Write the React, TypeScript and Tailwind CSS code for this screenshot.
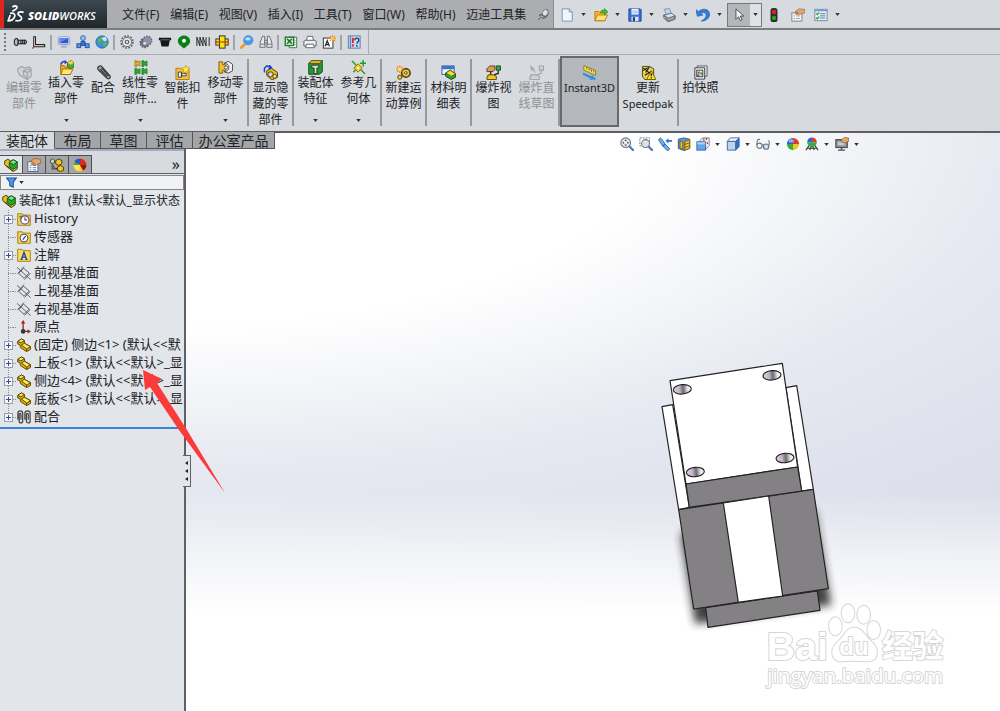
import type { ReactNode } from 'react';

const Y = '#f5c518';
const G = '#1f9d2c';
const K = '#222';

// All drawings use a 16x16 grid
const icons: Record<string, ReactNode> = {
  bolt: (
    <g fill="#b9bcc0" stroke={K} strokeWidth="1.2">
      <path d="M1.5 8c0-3 1-4 2.5-4s2 1.500 2 4-.5 4-2 4-2.500-1-2.500-4z" />
      <path d="M6 6h8.500l1 2-1 2H6z" />
      <path d="M9 5.500v5M11 5.500v5M13 5.500v5" />
    </g>
  ),
  angle: (
    <g fill="#f4f4f4" stroke={K} strokeWidth="1.2">
      <path d="M2 2h2v9h10.500v2.500H2z" />
      <path d="M0.500 15.500l1.500-2" stroke="#e02020" />
    </g>
  ),
  monitor: (
    <g>
      <rect x="1.500" y="2" width="13" height="9" rx="1" fill="#e6eaf4" stroke="#8d98b5" />
      <rect x="3" y="3.500" width="10" height="6" fill="#2c56d8" />
      <path d="M3 9.500L13 3.500H3z" fill="#5b86f0" />
      <path d="M5.500 12h5l1.500 2.500H4z" fill="#aab2c8" />
    </g>
  ),
  network: (
    <g>
      <path d="M8 6v4M4 11l4-3 4 3" stroke="#333" fill="none" />
      <circle cx="8" cy="3.500" r="2.800" fill="#8fc0f5" stroke="#2a5fb4" />
      <rect x="1" y="10" width="4.500" height="4.500" fill="#5c92e6" stroke="#1e4fa8" />
      <rect x="10.500" y="10" width="4.500" height="4.500" fill="#5c92e6" stroke="#1e4fa8" />
      <rect x="5.800" y="7.500" width="4.500" height="4.500" fill="#3b72cc" stroke="#1e4fa8" />
    </g>
  ),
  globe: (
    <g>
      <circle cx="8" cy="8" r="7" fill="#3d8de8" stroke="#1c5fb4" />
      <path d="M3 5l4-3 3 2-3 3-1 3-3-1zM9 9l4-2 1 3-3 4-2-2z" fill="#56b746" />
      <path d="M8 3l4-1 2 4-3 1-2-1z" fill="#cfe4fb" />
    </g>
  ),
  gearOutline: (
    <g fill="none" stroke="#5c646c">
      <circle cx="8" cy="8" r="6.800" strokeWidth="1.800" strokeDasharray="2 1.500" />
      <circle cx="8" cy="8" r="5.300" fill="#e4e7ea" />
      <circle cx="8" cy="8" r="2" strokeWidth="1.400" />
    </g>
  ),
  gearSolid: (
    <g>
      <circle cx="6.500" cy="9" r="5" fill="#77758c" stroke="#5a5870" strokeWidth="2" strokeDasharray="1.800 1.300" />
      <circle cx="9.500" cy="6.500" r="5" fill="#928fa6" stroke="#6b6980" strokeWidth="1.800" strokeDasharray="1.800 1.300" />
      <circle cx="6.500" cy="9.500" r="1.800" fill="#d7dade" />
    </g>
  ),
  bushing: (
    <g>
      <path d="M1 3h14v3h-1.500L12 13H4L2.500 6H1z" fill="#171717" />
      <path d="M3 5.500h10" stroke="#777" />
    </g>
  ),
  pin: (
    <g>
      <path d="M8 .5C4 .5 1 3.300 1 7c0 3.500 4 5.500 7 8.500 3-3 7-5 7-8.500C15 3.300 12 .5 8 .5z" fill="#0a7f14" />
      <circle cx="8" cy="6.500" r="2.300" fill="#fff" />
    </g>
  ),
  spring: <path d="M1 2.500v10M1 2.500l3.500 10v-10l3.500 10v-10l3.500 10v-10M15 2.500v10" stroke={K} fill="none" strokeWidth="1.100" />,
  coupling: (
    <g stroke={K}>
      <rect x="1" y="4.500" width="14" height="7" fill="#f7e711" />
      <rect x="5" y="1" width="6.500" height="14" fill="#f7e711" />
      <path d="M0 8h16" stroke="#e02020" strokeWidth="1.300" />
    </g>
  ),
  search: (
    <g>
      <path d="M1.500 14.500l4.500-4.500" stroke="#ee9a1c" strokeWidth="3" strokeLinecap="round" />
      <circle cx="9.500" cy="6" r="5.300" fill="#3b9df2" stroke="#6f87c8" />
      <ellipse cx="9" cy="4.500" rx="3" ry="1.800" fill="#bfe0ff" />
    </g>
  ),
  binoculars: (
    <g fill="#e8ebee" stroke="#5b6168">
      <path d="M4 1.500h2.500v4.500l.5 8H1L1.500 8z" />
      <path d="M12 1.500H9.500v4.500L9 14h6l-.5-6z" />
      <path d="M6.500 6h3v3h-3zM2 10.500h5M9 10.500h5" />
    </g>
  ),
  excel: (
    <g>
      <path d="M6 2.500h8.500v12H6z" fill="#fff" stroke="#356b3a" />
      <path d="M11 6h3M11 8.500h3M11 11h3" stroke="#8bb58e" />
      <rect x="1.500" y="2.500" width="9.500" height="9.500" fill="#e8f4e6" stroke="#1d7a2c" strokeWidth="1.600" />
      <path d="M3.500 4.500l5.500 5.500M9 4.500L3.500 10" stroke="#1d7a2c" strokeWidth="2" />
    </g>
  ),
  printer: (
    <g fill="#eceef0" stroke="#565c63">
      <path d="M5 1.500h6l1 5H4z" fill="#fff" />
      <path d="M1 7l2-1h10l2 1v5.500H1z" />
      <path d="M4 10.500h8l1 4H3z" fill="#fff" />
    </g>
  ),
  printerTilt: (
    <g stroke="#5b6168">
      <path d="M2.500 1.500l6-1 2.500 7-5.500 1z" fill="#b7d6f5" stroke="#7b93ad" />
      <path d="M2 8l9-2 4 3v3.500L7 15.500l-5-4z" fill="#dfe2e5" />
      <path d="M2 8l5 3.500 8-2.500-1 4-7 2.500z" fill="#9ea4aa" />
    </g>
  ),
  annotationView: (
    <g>
      <rect x="1.500" y="3.500" width="11" height="11.500" fill="#fff" stroke={K} />
      <path d="M3.500 13l2.500-6.500L8.500 13M4.500 11h3" stroke={K} strokeWidth="1.400" fill="none" />
      <path d="M12 0v8M8 4h8M9 1.200l6 5.600M15 1.200L9 6.800" stroke="#f08a1c" strokeWidth="1.200" />
      <circle cx="12" cy="4" r="1.700" fill="#ffd84a" />
    </g>
  ),
  check: (
    <g>
      <rect x="1.500" y="1" width="13.500" height="14" fill="#c7daf1" stroke="#4f74a5" />
      <path d="M4 1.500v13" stroke="#5d83b5" strokeWidth="1.500" />
      <path d="M6.800 3v6M6.800 10.500v2.500" stroke="#e02020" strokeWidth="2" />
      <path d="M9 6c0-3.500 4.500-3 4.500 0 0 2-2.200 1.500-2.200 4M11.300 11.500v2" stroke="#23427a" fill="none" strokeWidth="1.600" />
    </g>
  ),
  file: (
    <g>
      <path d="M2.500 1h8l3.500 3.500V15H2.500z" fill="#eff6ff" stroke="#6f8cad" />
      <path d="M10.500 1v3.500H14" fill="#c6dcf4" stroke="#6f8cad" />
    </g>
  ),
  open: (
    <g>
      <path d="M1 4h4.500L7 5.500h5.500V14.500H1z" fill="#f3b824" stroke="#b57d0c" />
      <path d="M4 8h11.500l-3 6.500H1z" fill="#ffe07a" stroke="#b57d0c" />
      <path d="M7.500 5.500c0-3.500 3-4 4.500-2.500V.5l4 4-4 3.500V6c-1.500-1-3-.5-4.500-.5z" fill="#42bb2f" stroke="#1c7d18" strokeWidth=".6" />
    </g>
  ),
  save: (
    <g>
      <path d="M1 1h13l1 1v13H1z" fill="#3a6fd6" stroke="#1b3f92" />
      <rect x="4" y="1" width="8" height="6.500" fill="#eef3fb" />
      <path d="M5 3.500h6M5 5.500h6" stroke="#9fb1d0" />
      <rect x="4" y="10" width="8" height="5" fill="#dde4ef" />
      <rect x="5.500" y="10.500" width="2.500" height="4.500" fill="#223c7a" />
    </g>
  ),
  undo: <path d="M0 2l1.500 7.500L8 8 5.500 6.500c2-2 5.500-1.500 6 1 .500 3-1.500 5-5.500 7.500 6 0 10-4 9.500-8.500C15 .5 7 .0 3 4z" fill="#2f80de" stroke="#1a56a8" strokeWidth=".7" />,
  cursor: <path d="M4.500 1v12l3-3 2 4.500 2-1-2-4.300h4z" fill="#f2f2f2" stroke="#444" />,
  traffic: (
    <g>
      <rect x="4" y="0" width="8" height="16" rx="3" fill="#2d2d2d" />
      <circle cx="8" cy="4.500" r="2.500" fill="#e32222" />
      <circle cx="8" cy="11.300" r="2.500" fill="#1fa827" />
    </g>
  ),
  properties: (
    <g>
      <rect x="1" y="5.500" width="11.500" height="9.500" fill="#f5f5f2" stroke="#777" />
      <path d="M3 9h1.500M6 9h4M3 12h1.500M6 12h4" stroke="#8a8f96" />
      <path d="M5 4l4-3 6.500.5v4l-4.500 1.500-5 .5-1.500-1.500 4-.5z" fill="#e0a870" stroke="#91602f" strokeWidth=".7" />
    </g>
  ),
  options: (
    <g>
      <rect x="1" y="1.500" width="14" height="13" fill="#e3eef9" stroke="#6d87a4" />
      <path d="M1 3h14" stroke="#6d9fd5" strokeWidth="1.500" />
      <path d="M7 6.500h6M7 9h6M7 11.500h6" stroke="#55708c" />
      <path d="M2.500 6l1.200 1.500L6 5M2.500 11l1.200 1.500L6 10" stroke={G} fill="none" strokeWidth="1.300" />
    </g>
  ),
  pushpin: (
    <g>
      <path d="M1.500 14.500l4-4" stroke="#555" strokeWidth="1.300" />
      <path d="M3 8l4.500-1.500L9 2l5-1 1 5-2.500 4.500L8 13z" fill="#6d7282" stroke="#4a4e5c" />
      <ellipse cx="11" cy="5" rx="3" ry="3.800" fill="#dfe2ea" transform="rotate(25 11 5)" />
      <path d="M4.500 9l4 2.500" stroke="#b8bcc8" strokeWidth="1.500" />
    </g>
  ),
  part: (
    <g stroke="#4c3b00" strokeWidth="1">
      <path d="M.8 4L5 1l3.500 2v3l7 4v3L11 15.500 4 11 3.500 8 .8 6.800z" fill="#dcae0c" />
      <path d="M.8 4L5 1l3.500 2-4 2.500zM5 8l3.500-2 7 4L11 12.500z" fill="#ffe75a" />
      <path d="M11 12.500v3" fill="none" />
    </g>
  ),
  assembly: (
    <g strokeWidth="1">
      <path d="M.8 3.500l3.500-2 3 1.500v4.500L15 9.500v3L10.500 15.500 3.500 10 .8 7.500z" fill="#edc01c" stroke="#3b2e00" />
      <path d="M6 5l4.500-3L15.200 4.500v5.500l-4.500 3L6 10z" fill="#20a72e" stroke="#0b4f16" />
      <path d="M6 5l4.500-3 4.700 2.500L11 7.500z" fill="#7ee27e" stroke="#0b4f16" />
      <path d="M3 9l7.500 6" stroke="#3b2e00" />
    </g>
  ),
  partGray: (
    <g fill="#d0d3d6" stroke="#a2a5a9" strokeWidth="1.200">
      <path d="M1 4l4-2.500 3 1.500 5-1 2 2v8l-4 3.500L3 11 1 7z" />
      <path d="M7 6l5-2 3 1.500-4 2.500zM11 8v7M7 6v5l4 3" />
    </g>
  ),
  insertPart: (
    <g>
      <path d="M1.500 6h4l1 1.500H12V15.500H2z" fill="#efaa14" stroke="#a36d05" />
      <path d="M4 9.500h11L12 15.500H2z" fill="#ffe479" stroke="#a36d05" />
      <path d="M2 5c.5-3 3-4 5-3" stroke="#1a3bd0" fill="none" strokeWidth="1.600" />
      <path d="M6 0l3 2.500-3 2z" fill="#1a3bd0" />
      <path d="M9 3l3.500-2.500L16 3v4.500L12 9.500 9 7z" fill="#38b43c" stroke="#6d5704" />
      <path d="M9 3l3.500-2.500L16 3l-3.500 2z" fill="#f2d33a" />
    </g>
  ),
  mate: (
    <g fill="none" stroke="#3c3c3c" strokeWidth="1.400">
      <path d="M2.500 5l9 9c2 2 5-.5 3-2.800L6.500 2C4-.5.5 2.500 2.500 5z" fill="#a9abae" />
      <path d="M4.500 4.500l7.500 8M6 3l7.500 8.500" />
    </g>
  ),
  pattern: (
    <g>
      <path d="M2 .8h2v1.700l3.500-1.500v5.500L4 5v2H2z" fill="#f0b41b" stroke="#765704" strokeWidth=".6" />
      <path d="M9.500.8h2v1.700l3.500-1.500v5.500L11.500 5v2h-2zM2 9h2v1.700l3.500-1.500v5.500L4 13.300v2H2zM9.500 9h2v1.700L15 9.200v5.500l-3.500-1.400v2h-2z" fill="#1fb325" stroke="#0d5c14" strokeWidth=".6" />
    </g>
  ),
  smartFastener: (
    <g>
      <path d="M1 3.500h5L7.500 5H15v10.500H1z" fill="#f1c24a" stroke="#b37c10" />
      <path d="M3.500 7.500h3.500v5.500H3.500zM7 9h5v2.500H7z" fill="#e8e8e8" stroke="#333" strokeWidth=".9" />
      <path d="M11.500 0l1.200 3 3.300.2-2.500 2.300L14.500 9l-3-2-3 2 1-3.500L7 3.200 10.300 3z" fill="#fff04a" stroke="#c88a12" strokeWidth=".7" />
    </g>
  ),
  moveComponent: (
    <g>
      <path d="M1 2h4v3h3v6H5v3H1z" fill="#f3bd28" stroke="#6f5104" strokeWidth=".9" />
      <path d="M6.500 3.500L11 1.500l4.500 3v7L11 14 6.500 12.500c4-.5 5-2 5-4.500s-1-4-5-4.500z" fill="#f1f1f1" stroke="#444" />
      <circle cx="8.500" cy="8" r="1.700" fill="#eee" stroke="#444" strokeWidth=".8" />
    </g>
  ),
  showHidden: (
    <g>
      <path d="M4 6l5-2.500 6.500 4.500v5L9.500 16 4 11z" fill="#e9ba19" stroke="#4f3e02" />
      <circle cx="8" cy="10" r="2.800" fill="#cfd3da" stroke="#4f3e02" />
      <circle cx="12.500" cy="12" r="2" fill="#fff2a0" stroke="#4f3e02" />
      <path d="M1.500 8V3.500L4 1l4 1.500M6.500 0L9 2.800 6 4" stroke="#1d3ed2" fill="none" strokeWidth="1.500" />
    </g>
  ),
  asmFeature: (
    <g>
      <path d="M.8 3.500L4 .8h11.200v12L12 15.200H.8z" fill="#1f9d2c" stroke="#0e4d18" />
      <path d="M.8 3.500L4 .8h11.200L12 3.500z" fill="#f2d33a" stroke="#5e4c04" />
      <path d="M4 5.500h7.500v3H9.500v6h-3v-6H4z" fill="#d7dadf" stroke="#333" />
    </g>
  ),
  refGeometry: (
    <g>
      <path d="M1 1l4.500 4.500M15 15l-4.500-4.500M13 0v7M9.500 3.500h6.500M2.500 13l2.500-2.500" stroke={G} strokeWidth="1.500" />
      <path d="M7.500 4l4.500 4.500L7.500 13 3 8.500z" fill="#f2cc26" stroke="#8c6e07" />
      <circle cx="7.500" cy="8.500" r="1.200" fill="#fff" />
    </g>
  ),
  motion: (
    <g>
      <circle cx="10.500" cy="8.500" r="4.500" fill="#f2c83a" stroke="#4f3e02" strokeWidth="1.700" />
      <circle cx="10.500" cy="8.500" r="1.400" fill="#fff" stroke={K} strokeWidth=".8" />
      <circle cx="4" cy="13" r="2.200" fill="#f2c83a" stroke="#4f3e02" />
      <path d="M4 .5v8M0 4.500h8M1.200 1.700l5.600 5.600M6.800 1.700L1.200 7.300" stroke="#ef7a14" strokeWidth="1.200" />
      <circle cx="4" cy="4.500" r="2" fill="#ffe45e" />
    </g>
  ),
  bom: (
    <g>
      <rect x="1" y="1" width="13" height="9" fill="#f2f6fc" stroke="#315fa8" />
      <rect x="1" y="1" width="13" height="3.500" fill="#3f74cc" />
      <path d="M5 8.500L10 5.500l5.500 4v3.500L11 15.500 5 12z" fill="#27a833" stroke="#0e4d18" />
      <path d="M5 8.500l5-3 5.500 4-4.500 2.500z" fill="#f0dc3c" stroke="#5e4c04" strokeWidth=".8" />
    </g>
  ),
  explode: (
    <g>
      <path d="M1 4l3-3h5.500v4L7.500 7H1z" fill="#d59b5b" stroke="#5f3b12" />
      <path d="M11 1h4.500v4.500H11z" fill="#2fb43a" stroke="#0e4d18" />
      <path d="M13 5.500V9L8.500 10.500M5 7v4" stroke={K} fill="none" strokeWidth="1.400" />
      <path d="M2 10.500h6l3 1.500v3.500H1v-3h1z" fill="#f3c622" stroke="#5e4c04" />
    </g>
  ),
  explodeGray: (
    <g fill="#cfd2d6" stroke="#a3a6aa" strokeWidth="1.200">
      <path d="M2 2l5 6M11 1h4.500v4.500H11zM13 5.500V9l-4.500 1.500M2 10.500h6l3 1.500v3.500H1v-3h1z" />
      <path d="M2 2l1 3.500 2-2z" />
    </g>
  ),
  instant3d: (
    <g>
      <path d="M2 .5L14.500 6v5L2 5.500z" fill="#f6e65a" stroke="#8b7b16" />
      <path d="M5 2.500v2M7.500 3.500v2.500M10 4.700v2.500M12.500 6v2" stroke="#6b5e0c" />
      <path d="M1 8l9.500 4.200L10 10l5.500 5.500-8 .3 1.500-1.500L1 10.500z" fill="#2a8fe8" />
    </g>
  ),
  speedpak: (
    <g>
      <path d="M1.500 1.500H9l4.500 2.500v11.500H4L1.500 12z" fill="#efd24c" stroke="#4f4608" />
      <path d="M2.500 3l7 6M9 2l-4 6M4 11l7-4M2 6l5-3" stroke={K} strokeWidth="1.200" />
      <path d="M11 6l4.800 9.500H6z" fill="#ffe61c" stroke="#6c5b00" />
      <path d="M11 9v3M11 13v1.500" stroke={K} strokeWidth="1.400" />
    </g>
  ),
  snapshot: (
    <g>
      <path d="M4.500 1h10.500v11H4.500z" fill="#f0f0f0" stroke="#555" />
      <path d="M2 3h10.500v12H2z" fill="#fff" stroke="#333" />
      <rect x="4" y="5.500" width="6.500" height="7" fill="#eee" stroke="#333" />
      <path d="M4.500 8.500L7 6v3.500z" fill="#e22" />
      <path d="M7 8h3v4z" fill="#16a02a" />
      <path d="M4.500 10H7v2H4.500z" fill="#2560d8" />
    </g>
  ),
  property: (
    <g>
      <rect x="1" y="4.500" width="11.500" height="11" fill="#fff" stroke="#4b6188" />
      <path d="M3 8.500h2M6.500 8.500h4M3 11h2M6.500 11h4M3 13.500h2M6.500 13.500h4" stroke="#4776bb" />
      <path d="M4 3.500L9 .5l6.500 1v4.500L11 7.500l-5 .5-1.500-1.500 4-.5z" fill="#e3a868" stroke="#84511d" strokeWidth=".7" />
    </g>
  ),
  config: (
    <g>
      <path d="M2.500 2v11M2.500 5H6M2.500 12.500h6" stroke="#333" fill="none" />
      <path d="M.8 2L3 .8 5 2v3.500L3 6.500.8 5.500z" fill="#d9d9d9" stroke="#333" />
      <path d="M6.500 3L10 1l3.500 2v3.500L10 8.500 6.500 6.500zM8.500 10.500L12 8.500l3.500 2V14L12 15.500 8.500 14z" fill={Y} stroke="#3d3100" />
      <path d="M4 8.500c0 3 1.500 3.500 4 3.500" stroke="#333" fill="none" />
    </g>
  ),
  ball: (
    <g>
      <path d="M8 8V1A7 7 0 0 0 1 8z" fill="#2c64dd" />
      <path d="M8 8V1a7 7 0 0 1 7 7z" fill="#e13a2f" />
      <path d="M8 8v7a7 7 0 0 1-7-7z" fill="#37ad3f" />
      <path d="M8 8v7a7 7 0 0 0 7-7z" fill="#efc51f" />
      <ellipse cx="6" cy="4.500" rx="3" ry="1.900" fill="#fff" opacity=".5" />
    </g>
  ),
  display: (
    <g>
      <circle cx="8" cy="8" r="7.300" fill="#f2ca20" />
      <path d="M8 8L1.600 4.500A7.300 7.300 0 0 1 8 .7z" fill="#2b54c8" />
      <path d="M8 8V.7A7.300 7.300 0 0 1 15.300 8z" fill="#d92a20" />
      <path d="M8 8h7.300a7.300 7.300 0 0 1-3.800 6.400z" fill="#8f1414" />
      <path d="M.7 7L8 8l-1 7.200A7.300 7.300 0 0 1 .7 7z" fill="#ffe552" />
      <path d="M8 8L1.600 4.500.7 8z" fill="#3ba741" />
    </g>
  ),
  funnel: <path d="M1 1.500h14L10.500 7.500v7.500l-5-2.500v-5z" fill="#4a9cf0" stroke="#174f9e" strokeWidth="1.500" />,
  history: (
    <g>
      <path d="M.8 2h5.200l1 1.500h8.200V15.200H.8z" fill="#f7d354" stroke="#a37708" />
      <circle cx="9" cy="9" r="4.700" fill="#fff" stroke="#5a50a8" strokeWidth="1.400" />
      <path d="M9 6v3h2.500" stroke="#d02828" fill="none" strokeWidth="1.200" />
      <path d="M2.500 4.500l2 4 2.500-4.500" fill={G} />
    </g>
  ),
  sensor: (
    <g>
      <path d="M.8 2h5.200l1 1.500h8.200V15.200H.8z" fill="#f7d354" stroke="#a37708" />
      <circle cx="8" cy="9.200" r="4.500" fill="#fff" stroke="#333" />
      <path d="M6.500 11l3.500-4" stroke="#1d4ac0" strokeWidth="1.600" />
    </g>
  ),
  annotations: (
    <g>
      <path d="M.8 1.500h5.200l1 1.500h8.200V15.200H.8z" fill="#f9db5f" stroke="#a37708" />
      <path d="M5 13l3-8 3 8M6 10.500h4M4 13h2.500M9.500 13H12" stroke="#1d3fb5" strokeWidth="1.500" fill="none" />
    </g>
  ),
  plane: <path d="M7.500 2.500L14 8l-6 6L2 8.500zM0 1.500l15.500 14M.5 9L8 .5M8.500 15.500L15 8.500" fill="none" stroke="#5c5f63" strokeWidth="1.100" />,
  origin: (
    <g>
      <path d="M7 3v10h6" stroke="#9d1f1f" strokeWidth="1.500" fill="none" />
      <path d="M7 0l2.500 4h-5zM16 13l-4 2.500v-5z" fill="#9d1f1f" />
      <circle cx="7" cy="13" r="2.600" fill="#333" />
    </g>
  ),
  mates: (
    <g fill="none" stroke="#444" strokeWidth="1.400">
      <path d="M1 11V4c0-4 5.500-4 5.500 0v8.500c0 3-4 3-4 0V5c0-1.500 2-1.500 2 0v6" />
      <path d="M9 11V4c0-4 6-4 6 0v8.500c0 3-4.300 3-4.300 0V5c0-1.500 2.200-1.500 2.200 0v6" />
    </g>
  ),
  zoomFit: (
    <g>
      <path d="M10.500 10.500l4.500 4.500" stroke="#4d7fc8" strokeWidth="2.600" strokeLinecap="round" />
      <circle cx="6.500" cy="6.500" r="5.500" fill="#e5e9ee" stroke="#6e7680" strokeWidth="1.300" />
      <path d="M6.500 2.500l1.500 2H5zM6.500 10.500l1.500-2H5zM2.500 6.500l2-1.500v3zM10.500 6.500l-2-1.500v3z" fill="#4f565f" />
    </g>
  ),
  zoomArea: (
    <g>
      <path d="M11 11l4 4" stroke="#4d7fc8" strokeWidth="2.600" strokeLinecap="round" />
      <rect x="1" y="1" width="11" height="9" fill="none" stroke="#666" strokeDasharray="2 1.300" />
      <circle cx="7.500" cy="7.500" r="4.500" fill="#dde2e8" stroke="#6e7680" strokeWidth="1.200" />
    </g>
  ),
  prevView: (
    <g>
      <path d="M.5 3L3 1l4 5 1 2 5.500 5.500-2.500 2.500L5.500 10.500 4 8.500z" fill="#6bb0ec" stroke="#2b62a5" />
      <path d="M8 8l-2.500 2.500" stroke="#2b62a5" strokeWidth="1.300" />
      <path d="M8.500 4.500l3.500-3v2h4v2h-4v2z" fill="#2d6fd6" />
    </g>
  ),
  section: (
    <g>
      <path d="M1.500 2.500L8 1l6.500 1.500v10.500L8 15.500 1.500 13z" fill="#5b93dd" stroke="#2a5596" />
      <path d="M3.500 4.500v8.500l3 1V5.500zM9 5l5.500-2v10L9 15z" fill={Y} stroke="#7a5d05" />
      <path d="M9 8.500l5.500-2M9 12l5.500-2" stroke="#7a5d05" />
    </g>
  ),
  viewCube: (
    <g>
      <path d="M4.500 4.500L7.500 1H15v9l-4 4z" fill="#eef3f8" stroke="#6d7783" />
      <rect x="1" y="5.500" width="10" height="9.500" fill="#62a5e8" stroke="#31639f" />
      <path d="M1.500 6h9v2.500h-9z" fill="#a8d1f7" />
      <path d="M9 1.500v3M12 1v2.500M13 6v2" stroke="#d32b2b" strokeWidth="1.300" />
    </g>
  ),
  cube: (
    <g stroke="#3f5f92">
      <path d="M1.500 5l3.500-4h10L11 5z" fill="#f5f9fd" />
      <path d="M11 5l4-4v10L11 15z" fill="#356fd0" />
      <path d="M1.500 5H11v10H1.500z" fill="#b8d7f5" />
    </g>
  ),
  glasses: (
    <g fill="none" stroke="#6f767f" strokeWidth="1.300">
      <circle cx="4" cy="10" r="3" />
      <circle cx="11.500" cy="11" r="3" fill="#cfe2f5" />
      <path d="M7 9.500c.7-.8 1.300-.7 1.800 0M1 9c0-6 1-7 3.500-6M14.500 10c1-3 1-5.500-.5-6" />
    </g>
  ),
  scene: (
    <g>
      <path d="M8 6V.5A5.500 5.500 0 0 0 2.500 6z" fill="#2c64dd" />
      <path d="M8 6V.5A5.500 5.500 0 0 1 13.500 6z" fill="#e13a2f" />
      <path d="M8 6v5.500A5.500 5.500 0 0 1 2.500 6z" fill="#37ad3f" />
      <path d="M8 6v5.500A5.500 5.500 0 0 0 13.500 6z" fill="#37ad3f" />
      <path d="M1 15l3.500-5M15 15l-3.500-5M5.500 15l1.500-4M10.500 15L9 11M2 12.800h12" stroke="#333" fill="none" strokeWidth="1.300" />
    </g>
  ),
  viewSettings: (
    <g>
      <rect x="1" y="3" width="13" height="9" fill="#8e959d" stroke="#4d5359" strokeWidth="1.400" />
      <path d="M3 5.500h8v4H3z" fill="#c4cace" />
      <path d="M3.500 15h8M7.500 12v3" stroke="#4d5359" strokeWidth="1.700" />
      <path d="M7 3l4-2.500 4.500.5V5L12 6.500 8 6z" fill="#e3a868" stroke="#84511d" strokeWidth=".7" />
    </g>
  ),
};

function Icon({ name, className = 'size-4' }: { name: string; className?: string }) {
  return (
    <svg viewBox="0 0 16 16" className={`shrink-0 ${className}`} aria-hidden="true">
      {icons[name]}
    </svg>
  );
}

function Caret() {
  return (
    <svg viewBox="0 0 6 4" className="w-[5px] h-[3px] shrink-0" aria-hidden="true">
      <path d="M0 0h6L3 4z" fill="#333" />
    </svg>
  );
}

function IconButton({ name, label, className = 'w-[19px]' }: { name: string; label: string; className?: string }) {
  return (
    <button aria-label={label} className={`flex shrink-0 items-center justify-center ${className}`}>
      <Icon name={name} className="size-[14px]" />
    </button>
  );
}

const menus = ['文件(F)', '编辑(E)', '视图(V)', '插入(I)', '工具(T)', '窗口(W)', '帮助(H)', '迈迪工具集'];

function TitleBar() {
  return (
    <header className="flex h-[30px] shrink-0 items-stretch border-b-2 border-[#7c7d7f] bg-[#d7dade]">
      <div className="flex w-[107px] shrink-0 items-center border-l-4 border-[#e0261c] bg-linear-to-b from-[#3d4850] to-[#20272c] text-white">
        <svg viewBox="0 0 54 54" className="ml-[3px] h-[18px] w-[18px] shrink-0" aria-label="DS">
          <g fill="none" stroke="#fff" strokeWidth="5" strokeLinejoin="round">
            <path d="M16 6c6-4 12-3 14 0 1 4-6 9-14 13" />
            <path d="M9 25c12-2 17 3 14 10-3 7-10 13-20 13l7-18" />
            <path d="M50 22c-10-3-18 0-17 5 1 5 12 6 11 13-1 6-10 8-19 7" />
          </g>
        </svg>
        <span className="mt-1 ml-[3px] font-['Open_Sans'] text-[11px] leading-4 font-semibold italic">
          <b className="font-extrabold">SOLID</b>WORKS
        </span>
      </div>
      <nav className="flex w-[447px] shrink-0 items-center justify-between border-r border-[#8a8a8d] bg-[#acadb0] pt-px pr-1 pl-[15px]">
        {menus.map(m => (
          <button key={m} className="whitespace-nowrap">{m}</button>
        ))}
        <Icon name="pushpin" className="size-3" />
      </nav>
      <div className="flex items-center pt-px pl-px">
        {[
          ['file', '新建'],
          ['open', '打开'],
          ['save', '保存'],
          ['printerTilt', '打印'],
          ['undo', '撤销'],
        ].map(([name, label]) => (
          <button key={name} aria-label={label} className="flex w-[34px] items-center justify-between pr-[3px] pl-[5px]">
            <Icon name={name} className="size-[14px]" />
            <Caret />
          </button>
        ))}
        <button aria-label="选择" className="ml-[2px] flex h-6 w-[35px] items-stretch border border-[#77797c]">
          <span className="flex w-[22px] items-center justify-center bg-[#b4b6ba]"><Icon name="cursor" className="size-[14px]" /></span>
          <span className="flex flex-1 items-center justify-center bg-[#dfe2e5]"><Caret /></span>
        </button>
        <IconButton name="traffic" label="重建模型" className="w-6" />
        <IconButton name="properties" label="文件属性" className="w-6" />
        <button aria-label="选项" className="flex w-[30px] items-center justify-between pl-1"><Icon name="options" className="size-[14px]" /><Caret /></button>
      </div>
    </header>
  );
}

const toolGroups = [
  [['bolt', '螺栓'], ['angle', '型材']],
  [['monitor', '桌面'], ['network', '网络'], ['globe', '网页']],
  [['gearOutline', '齿轮'], ['gearSolid', '齿轮组'], ['bushing', '衬套'], ['pin', '凸轮'], ['spring', '弹簧'], ['coupling', '联轴器']],
  [['search', '搜索'], ['binoculars', '查找']],
  [['excel', '表格'], ['printer', '打印'], ['annotationView', '图纸']],
  [['check', '检查']],
];

function ToolBar() {
  return (
    <div className="flex h-[25px] shrink-0 border-b border-[#a9abae]">
      <div className="flex items-center border-r border-[#a9abae] pr-[5px] pl-1">
        <span className="mr-1 h-[18px] border-l-2 border-dotted border-[#777]" />
        {toolGroups.map((group, i) => (
          <div key={i} className="flex items-center">
            {i > 0 && <span className="mx-[2px] h-[15px] w-[2px] bg-[#a3a5a8]" />}
            {group.map(([name, label]) => (
              <IconButton key={name} name={name} label={label} />
            ))}
          </div>
        ))}
      </div>
    </div>
  );
}

type Command = { icon: string; lines: string[]; width: string; menu?: boolean; disabled?: boolean; active?: boolean };

const commandGroups: Command[][] = [
  [
    { icon: 'partGray', lines: ['编辑零', '部件'], width: 'w-[42px]', disabled: true },
    { icon: 'insertPart', lines: ['插入零', '部件'], width: 'w-[42px]', menu: true },
    { icon: 'mate', lines: ['配合'], width: 'w-8' },
    { icon: 'pattern', lines: ['线性零', '部件...'], width: 'w-[42px]', menu: true },
    { icon: 'smartFastener', lines: ['智能扣', '件'], width: 'w-[43px]' },
    { icon: 'moveComponent', lines: ['移动零', '部件'], width: 'w-[43px]', menu: true },
  ],
  [{ icon: 'showHidden', lines: ['显示隐', '藏的零', '部件'], width: 'w-[43px]' }],
  [
    { icon: 'asmFeature', lines: ['装配体', '特征'], width: 'w-[43px]', menu: true },
    { icon: 'refGeometry', lines: ['参考几', '何体'], width: 'w-[43px]', menu: true },
  ],
  [{ icon: 'motion', lines: ['新建运', '动算例'], width: 'w-[43px]' }],
  [{ icon: 'bom', lines: ['材料明', '细表'], width: 'w-[43px]' }],
  [
    { icon: 'explode', lines: ['爆炸视', '图'], width: 'w-[43px]' },
    { icon: 'explodeGray', lines: ['爆炸直', '线草图'], width: 'w-[43px]', disabled: true },
  ],
  [
    { icon: 'instant3d', lines: ['Instant3D'], width: 'w-[59px]', active: true },
    { icon: 'speedpak', lines: ['更新', 'Speedpak'], width: 'w-[58px]' },
  ],
  [{ icon: 'snapshot', lines: ['拍快照'], width: 'w-[43px]' }],
];

function CommandButton({ icon, lines, width, menu, disabled, active }: Command) {
  return (
    <button
      disabled={disabled}
      className={`relative flex h-[71px] shrink-0 flex-col items-center ${width} ${menu ? 'pt-1' : 'pt-[9px]'} ${
        disabled ? 'text-[#8f9194]' : ''
      } ${active ? 'bg-[#b4b7bb] outline-2 -outline-offset-2 outline-[#68696b]' : ''}`}
    >
      <Icon name={icon} className="size-[15px]" />
      {lines.map(line => (
        <span key={line} className={`leading-4 whitespace-nowrap ${/^[A-Z]/.test(line) ? 'text-[11px]' : ''}`}>{line}</span>
      ))}
      {menu && <span className="absolute bottom-[5px]"><Caret /></span>}
    </button>
  );
}

function Ribbon() {
  return (
    <div className="flex h-[78px] shrink-0 items-start border-b-2 border-[#5d5e60] pt-px pl-[3px]">
      {commandGroups.map((group, i) => (
        <div key={i} className="flex items-center">
          {i > 0 && <span className="mt-[2px] h-[67px] w-[2px] bg-[#97999c]" />}
          {group.map(c => (
            <CommandButton key={c.icon} {...c} />
          ))}
        </div>
      ))}
    </div>
  );
}

const tabs = [
  ['装配体', 'w-[55px]'],
  ['布局', 'w-[46px]'],
  ['草图', 'w-[46px]'],
  ['评估', 'w-[46px]'],
  ['办公室产品', 'w-[82px]'],
];

function CommandTabs() {
  return (
    <nav className="relative z-10 -mt-px flex h-[17px] w-max">
      {tabs.map(([label, width], i) => (
        <button
          key={label}
          className={`border-r border-b text-sm leading-[15px] whitespace-nowrap ${width} ${
            i === 0 ? 'border-r-[#55565a] border-b-[#d7dade] bg-[#d7dade]' : 'border-[#55565a] bg-[#a4a5a8]'
          }`}
        >
          {label}
        </button>
      ))}
    </nav>
  );
}

const treeItems = [
  { icon: 'history', label: 'History', expandable: true },
  { icon: 'sensor', label: '传感器' },
  { icon: 'annotations', label: '注解', expandable: true },
  { icon: 'plane', label: '前视基准面' },
  { icon: 'plane', label: '上视基准面' },
  { icon: 'plane', label: '右视基准面' },
  { icon: 'origin', label: '原点' },
  { icon: 'part', label: '(固定) 侧边<1> (默认<<默', expandable: true },
  { icon: 'part', label: '上板<1> (默认<<默认>_显', expandable: true },
  { icon: 'part', label: '侧边<4> (默认<<默认>_显', expandable: true },
  { icon: 'part', label: '底板<1> (默认<<默认>_显', expandable: true },
  { icon: 'mates', label: '配合', expandable: true },
];

function FeatureTree() {
  return (
    <div className="overflow-hidden border-b-2 border-[#3b82d8] bg-[#e2e5ea] pt-[2px] text-[13px]">
      <div className="flex h-[18px] items-center gap-[3px] pl-[2px] whitespace-pre">
        <Icon name="assembly" className="size-[14px]" />
        <span className="text-xs">装配体1  (默认&lt;默认_显示状态</span>
      </div>
      <ul className="relative pb-px">
        <li aria-hidden="true" className="absolute top-0 bottom-2 left-2 border-l border-dotted border-[#8b8d90]" />
        {treeItems.map(item => (
          <li key={item.label} className="relative flex h-[18px] items-center pl-1 whitespace-nowrap">
            {item.expandable ? (
              <button aria-label={`展开 ${item.label}`} className="flex size-[9px] shrink-0 items-center justify-center border border-[#9a9da2] bg-[#f4f6f8]">
                <svg viewBox="0 0 5 5" className="size-[5px]"><path d="M0 2.500h5M2.500 0v5" stroke="#2c4da0" /></svg>
              </button>
            ) : (
              <span className="ml-1 w-[5px] shrink-0 border-t border-dotted border-[#8b8d90]" />
            )}
            <span className="mr-px w-[3px] shrink-0 border-t border-dotted border-[#8b8d90]" />
            <Icon name={item.icon} className="size-[14px]" />
            <span className="ml-[3px]">{item.label}</span>
          </li>
        ))}
      </ul>
    </div>
  );
}

function SidePanel() {
  return (
    <aside className="relative flex w-[186px] shrink-0 flex-col border-r-2 border-[#5f6164] bg-[#e2e5ea]">
      <CommandTabs />
      <div className="flex h-[25px] items-end border-t-2 border-b border-t-[#a5abc0] border-b-[#5f6164] bg-[#d7dade]">
        {['assembly', 'property', 'config', 'display'].map((name, i) => (
          <button
            key={name}
            aria-label={['设计树', '属性', '配置', '外观'][i]}
            className={`flex h-[18px] w-[23px] items-center justify-center border-t border-r border-[#4e4f52] ${i === 0 ? 'bg-[#e2e5ea]' : 'bg-[#a4a5a8]'}`}
          >
            <Icon name={name} className="size-[14px]" />
          </button>
        ))}
        <button aria-label="展开窗格" className="mr-1 ml-auto text-base leading-[18px]">»</button>
      </div>
      <label className="mt-px flex h-[15px] items-center gap-[2px] border border-[#84868a] bg-[#f1f2f4] pl-[5px]">
        <Icon name="funnel" className="size-[11px]" />
        <Caret />
        <input aria-label="过滤" className="min-w-0 flex-1 bg-transparent outline-none" />
      </label>
      <FeatureTree />
      <button
        aria-label="收起窗格"
        className="absolute top-[322px] -right-[7px] z-10 flex h-8 w-2 flex-col items-center justify-center gap-1 border border-l-0 border-[#5f6164] bg-[#e2e5ea]"
      >
        {[0, 1, 2].map(i => (
          <svg key={i} viewBox="0 0 3 4" className="h-1 w-[3px]"><path d="M3 0v4L0 2z" fill={K} /></svg>
        ))}
      </button>
    </aside>
  );
}

const viewTools: [string, string, boolean][] = [
  ['zoomFit', '整屏显示全图', false],
  ['zoomArea', '局部放大', false],
  ['prevView', '上一视图', false],
  ['section', '剖面视图', false],
  ['viewCube', '视图定向', true],
  ['cube', '显示样式', true],
  ['glasses', '隐藏/显示项目', true],
  ['ball', '编辑外观', false],
  ['scene', '应用布景', true],
  ['viewSettings', '视图设定', true],
];

const holes = [[127, 118], [396, 76], [435, 324], [166, 366]];

function Model() {
  return (
    <svg viewBox="0 0 660 870" className="absolute top-[217px] left-[454px] w-[220px] overflow-visible" aria-label="装配体模型">
      <defs>
        <linearGradient id="hole">
          <stop offset="0" stopColor="#e6d3ea" />
          <stop offset=".35" stopColor="#bfb0c3" />
          <stop offset=".55" stopColor="#6d6a70" />
          <stop offset=".8" stopColor="#e8e8e8" />
          <stop offset="1" stopColor="#fff" />
        </linearGradient>
        <filter id="shadow" x="-20%" y="-20%" width="140%" height="140%">
          <feGaussianBlur stdDeviation="13" />
        </filter>
      </defs>
      <path d="M122 550L524 480L574 765L535 770L165 822z" fill="#222" opacity=".85" filter="url(#shadow)" />
      <g stroke="#222" strokeWidth="3.500" strokeLinejoin="round" fill="#fff">
        <path d="M66 170L98 164L148 472L116 479z" />
        <path d="M438 113L470 107L520 418L485 423z" />
        <path d="M90 92L427 40L473 351L138 402z" />
        <path d="M197 773L532 723L540 781L204 832z" fill="#838184" />
        <path d="M116 479L520 418L565 716L161 777z" fill="#838184" />
        <path d="M138 402L473 351L485 423L148 472z" fill="#838184" />
        <path d="M250 459L386 438L428 738L295 757z" />
        {holes.map(([x, y]) => (
          <ellipse key={x} cx={x} cy={y} rx="27" ry="14" transform={`rotate(-5 ${x} ${y})`} fill="url(#hole)" />
        ))}
      </g>
    </svg>
  );
}

function Watermark() {
  return (
    <svg viewBox="0 0 630 330" className="absolute right-10 bottom-[11px] w-[210px]" aria-label="Baidu 经验">
      <g fill="#fff" stroke="#d6d6d6" strokeWidth="6" paintOrder="stroke">
        <text x="50" y="210" fontSize="118" fontWeight="700" fontFamily="Liberation Sans">Bai</text>
        <ellipse cx="256" cy="109" rx="19" ry="27" />
        <ellipse cx="294" cy="70" rx="19" ry="27" />
        <ellipse cx="341" cy="74" rx="19" ry="27" />
        <ellipse cx="371" cy="120" rx="19" ry="27" />
        <path d="M312 113c24 0 30 20 44 34 14 13 25 22 25 40 0 20-14 28-32 27-22-2-50-2-70 0-20 2-32-8-32-27 0-18 12-27 25-40 14-14 18-34 40-34z" />
        <text x="268" y="195" fontSize="72" fontWeight="700" fontFamily="Liberation Sans">du</text>
        <text x="396" y="202" fontSize="92" fontWeight="700" fontFamily="Noto Sans CJK SC">经验</text>
        <text x="52" y="278" fontSize="62" fontFamily="Open Sans">jingyan.baidu.com</text>
      </g>
    </svg>
  );
}

function Viewport() {
  return (
    <main className="relative min-w-0 flex-1 overflow-hidden bg-[linear-gradient(to_bottom,transparent_62%,rgba(255,255,255,0.6)_73%,#fff_83%),radial-gradient(ellipse_1060px_430px_at_0_0,#fff_44%,#f4f5f8_60%,#e6e9f1_78%,#dfe2ec_100%,#d8dbe7_130%)]">
      <div className="flex h-[22px] items-center justify-end pr-[138px]">
        {viewTools.map(([name, label, menu]) => (
          <button key={name} aria-label={label} className="flex items-center">
            <span className="flex w-[19px] justify-center"><Icon name={name} className="size-[14px]" /></span>
            {menu && <span className="flex w-[11px] justify-center"><Caret /></span>}
          </button>
        ))}
      </div>
      <Model />
      <Watermark />
    </main>
  );
}

export default function App() {
  return (
    <div className="flex min-h-screen flex-col bg-[#d7dade] font-['Noto_Sans','Noto_Sans_CJK_SC',sans-serif] text-xs text-[#202225]">
      <TitleBar />
      <ToolBar />
      <Ribbon />
      <div className="relative flex flex-1">
        <SidePanel />
        <Viewport />
        {/* callout arrow pointing at the top plate */}
        <svg viewBox="0 0 90 130" className="pointer-events-none absolute top-[235px] left-[140px] z-20 w-[90px]" aria-hidden="true">
          <path d="M3 2L22 11L17 15L47 62L85 125L39 62L10 19L5 22z" fill="#fb3b3a" />
        </svg>
      </div>
    </div>
  );
}
